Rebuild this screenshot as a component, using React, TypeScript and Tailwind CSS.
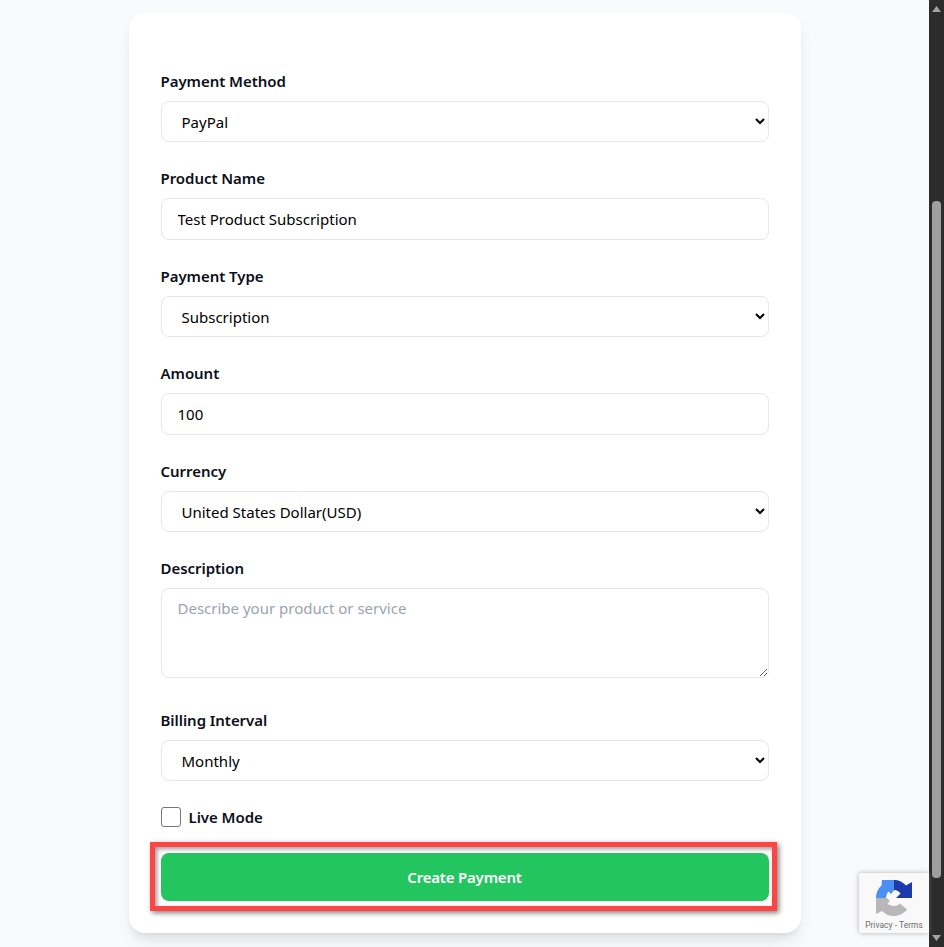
const font = "[font-family:'Noto_Sans',sans-serif]";

function Label({ children }: { children: string }) {
  return <label className="block text-[15px] leading-6 font-semibold tracking-[-0.05px] text-[#0b0f19] mb-2">{children}</label>;
}

function SelectField({ label, value, options }: { label: string; value: string; options: string[] }) {
  return (
    <div className="mb-6">
      <Label>{label}</Label>
      <select defaultValue={value} className="block w-full h-[41px] px-4 bg-white border border-[#e5e7eb] rounded-lg text-[15px] text-black outline-none">
        {options.map((o) => (
          <option key={o}>{o}</option>
        ))}
      </select>
    </div>
  );
}

function InputField({ label, value }: { label: string; value: string }) {
  return (
    <div className="mb-6">
      <Label>{label}</Label>
      <input defaultValue={value} className="block w-full h-[42px] px-4 bg-white border border-[#e5e7eb] rounded-lg text-[15px] text-black outline-none" />
    </div>
  );
}

function Recaptcha() {
  return (
    <div className="absolute right-[15px] top-[873px] w-[70px] h-[60px] bg-[#f9f9f9] rounded-l-[2px] shadow-[0_0_5px_rgba(128,128,128,0.6)] flex flex-col items-center overflow-hidden">
      <svg width="36" height="36" viewBox="0 0 36 36" className="mt-[7px] ml-[-1px] shrink-0">
        <path d="M18 0C23 0 27 2 30 5.500L36 2V18H20L24.500 13.500C23 11.500 21 10 18 10Z" fill="#1c3aa9" />
        <path d="M6 0H18V10.500L15 14 12.500 11.500C11 13 10 15.500 10 18H0C0 13 2 8.500 5.500 5.500Z" fill="#4a90f5" />
        <path d="M0 18H11L14 21 11.500 23.500C13 25 15.500 26 18 26 20.500 26 22.500 25 24 23.500L31 29.500C28 33.500 23 36 18 36 13 36 9 34 6 31L0 34Z" fill="#b8b8b8" />
      </svg>
      <span className="text-[8.5px] leading-3 mt-[3px] text-[#6f6f6f] whitespace-nowrap [font-family:Roboto,sans-serif]">Privacy - Terms</span>
    </div>
  );
}

function Scrollbar() {
  return (
    <div className="w-[15px] h-full shrink-0 bg-[#2c2c2c] flex flex-col items-center relative">
      <svg width="9" height="6" viewBox="0 0 9 6" className="mt-[6px]">
        <path d="M4.500 0L9 6H0z" fill="#a3a3a3" />
      </svg>
      <div className="w-[9px] h-[677px] mt-[189px] rounded-[4px] bg-[#9f9f9f]" />
      <svg width="9" height="6" viewBox="0 0 9 6" className="mt-[57px]">
        <path d="M4.500 6L9 0H0z" fill="#a3a3a3" />
      </svg>
    </div>
  );
}

export default function App() {
  return (
    <div className={`relative flex h-[947px] w-[944px] overflow-hidden bg-[#f9fafb] ${font}`}>
      <div className="flex-1 pt-[13px]">
        <div className="mx-auto w-[672px] h-[920px] bg-white rounded-2xl shadow-lg px-8 pt-14">
          <SelectField label="Payment Method" value="PayPal" options={["PayPal", "Stripe"]} />
          <InputField label="Product Name" value="Test Product Subscription" />
          <SelectField label="Payment Type" value="Subscription" options={["One-time", "Subscription"]} />
          <InputField label="Amount" value="100" />
          <SelectField label="Currency" value="United States Dollar(USD)" options={["United States Dollar(USD)", "Euro(EUR)"]} />
          <div className="mb-[30px]">
            <Label>Description</Label>
            <textarea placeholder="Describe your product or service" className="block w-full h-[90px] px-4 py-2 bg-white border border-[#e5e7eb] rounded-lg text-[15px] leading-[22px] outline-none placeholder:text-[#9ca3af]" />
          </div>
          <SelectField label="Billing Interval" value="Monthly" options={["Monthly", "Yearly"]} />
          <label className="flex items-center gap-2 h-6 mb-6 text-[15px] font-semibold tracking-[-0.05px] text-[#0b0f19]">
            <input type="checkbox" className="w-5 h-5 appearance-none bg-white border border-[#767676] rounded-[3px]" />
            Live Mode
          </label>
          <button className="block w-full h-12 bg-[#22c55e] rounded-lg text-[15px] font-semibold tracking-[-0.2px] text-white">Create Payment</button>
        </div>
      </div>
      <Scrollbar />
      <Recaptcha />
      {/* red highlight drawn over the button */}
      <div className="absolute left-[150px] top-[842px] w-[627px] h-[69px] border-[5px] border-[#ff4444] shadow-[2px_2px_5px_rgba(0,0,0,0.5),inset_2px_2px_4px_rgba(0,0,0,0.4)] pointer-events-none" />
    </div>
  );
}
